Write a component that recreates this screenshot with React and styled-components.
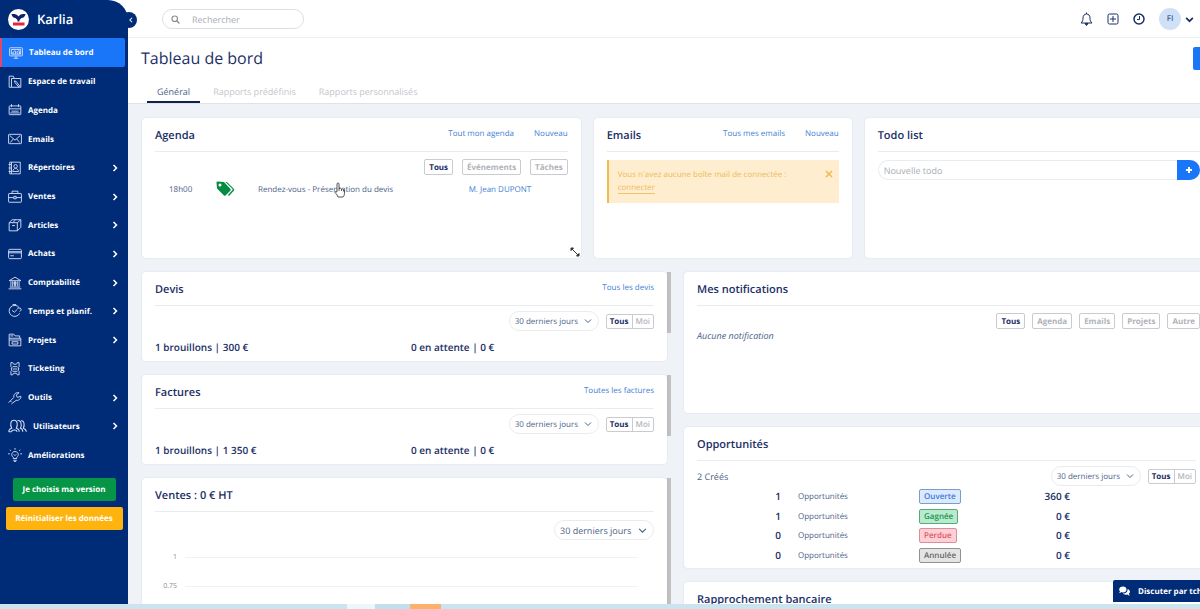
import React from "react";
import styled, { createGlobalStyle, css } from "styled-components";

const navy = "#002c77";
const ink = "#1b2f66";
const muted = "#4c6288";
const blue = "#1976f8";
const link = "#3f7fd4";
const line = "#e9ecef";

const GlobalStyle = createGlobalStyle`
  *, *::before, *::after { box-sizing: border-box; }
  html, body, #root { height: 100%; }
  body {
    margin: 0;
    overflow: hidden;
    font-family: "Open Sans", "Noto Sans", sans-serif;
    font-size: 9px;
    line-height: 13px;
    text-rendering: geometricPrecision;
    color: ${muted};
    background: #eff3f7;
  }
  button, input, select { font: inherit; color: inherit; margin: 0; text-rendering: inherit; }
  button { cursor: pointer; padding: 0; border: 0; background: none; }
  a { text-decoration: none; }
  h1, h2, p, ul { margin: 0; padding: 0; }
  ul { list-style: none; }
`;

const Shell = styled.div`
  height: 100vh;
  display: flex;
  flex-direction: column;
  overflow: hidden;
`;
const Workspace = styled.div`
  flex: 1;
  min-height: 0;
  display: flex;
  position: relative;
  overflow: hidden;
`;

/* Sidebar */
const SidebarWrap = styled.div`
  flex: none;
  position: relative;
  width: 128px;
  background: linear-gradient(#fff 103px, transparent 103px);
`;
const Sidebar = styled.aside`
  position: relative;
  height: 100%;
  background: ${navy};
  border-top-right-radius: 20px;
  color: #fff;
`;
const Collapse = styled.button`
  position: absolute;
  top: 12px;
  right: -9px;
  width: 16px;
  height: 16px;
  border-radius: 50%;
  background: ${navy};
  color: #fff;
  display: flex;
  align-items: center;
  justify-content: flex-end;
  padding-right: 3px;
`;
const Brand = styled.a`
  display: flex;
  align-items: center;
  gap: 8px;
  height: 38px;
  padding-left: 8px;
  color: #fff;
  font-size: 13px;
  font-weight: 600;
`;
const NavList = styled.ul`
  display: grid;
  grid-auto-rows: 1fr;
  height: 431px;
`;
const NavLink = styled.a`
  display: flex;
  align-items: center;
  gap: 6px;
  height: 100%;
  margin-right: 3px;
  padding: 1px 6px 0 8px;
  color: #fff;
  font-size: 8px;
  font-weight: 700;
  white-space: nowrap;
  > svg:first-child { flex: none; color: #d3dcf5; }
  > svg:last-child { margin-left: auto; }
  ${(p) =>
    p.$active &&
    css`
      background: ${blue};
      border-left: 2px solid #e0486b;
      border-radius: 0 2px 2px 0;
      padding-left: 7px;
    `}
`;
const SideActions = styled.div`
  display: flex;
  flex-direction: column;
  align-items: center;
  gap: 6px;
  padding-top: 9px;
`;
const SideButton = styled.button`
  height: 23px;
  width: ${(p) => (p.$wide ? "117px" : "103px")};
  border-radius: 2px;
  background: ${(p) => (p.$wide ? "#ffb30f" : "#069546")};
  color: #fff;
  font-size: 8px;
  font-weight: 700;
  white-space: nowrap;
`;

/* Top bar and page heading */
const Main = styled.main`
  flex: 1;
  min-width: 0;
`;
const TopBar = styled.header`
  height: 38px;
  display: flex;
  align-items: center;
  justify-content: space-between;
  padding: 1px 6px 0 34px;
  background: #fff;
  border-bottom: 1px solid #eceef1;
`;
const SearchBox = styled.label`
  display: flex;
  align-items: center;
  gap: 12px;
  width: 142px;
  height: 20px;
  padding: 0 8px;
  border: 1px solid #dcdfe3;
  border-radius: 10px;
  color: #8b8f97;
`;
const PlainInput = styled.input`
  flex: 1;
  min-width: 0;
  height: 100%;
  padding: 0;
  border: 0;
  outline: 0;
  background: none;
  &::placeholder { color: #a9adb5; opacity: 1; }
`;
const TopActions = styled.div`
  display: flex;
  align-items: center;
  gap: 14px;
  color: ${ink};
`;
const IconButton = styled.button`
  display: flex;
  align-items: center;
`;
const Account = styled.button`
  display: flex;
  align-items: center;
  gap: 4px;
`;
const Avatar = styled.span`
  width: 22px;
  height: 22px;
  border-radius: 50%;
  background: #cfe1f8;
  color: ${muted};
  font-size: 8px;
  font-weight: 600;
  line-height: 22px;
  text-align: center;
`;
const PageHead = styled.section`
  height: 66px;
  background: #fff;
  border-bottom: 1px solid #dfe3e8;
  padding-left: 13px;
  display: flex;
  flex-direction: column;
  justify-content: space-between;
`;
const TitleRow = styled.div`
  display: flex;
  justify-content: space-between;
  padding-top: 9px;
`;
const PageTitle = styled.h1`
  color: ${ink};
  font-size: 16px;
  line-height: 23px;
  font-weight: 500;
`;
const EditButton = styled.button`
  width: 7px;
  height: 23px;
  border-radius: 2px 0 0 2px;
  background: ${blue};
`;
const Tabs = styled.nav`
  display: flex;
  gap: 3px;
  padding-left: 6px;
`;
const Tab = styled.a`
  padding: 0 10px 2px;
  line-height: 14px;
  color: ${(p) => (p.$active ? muted : "#c3c6cb")};
  border-bottom: 2px solid ${(p) => (p.$active ? "#10204f" : "transparent")};
`;

/* Dashboard grid */
const Board = styled.div`
  display: grid;
  grid-template-columns: repeat(12, 1fr);
  gap: 14px 13px;
  margin-right: -13px;
  padding: 14px 0 0 14px;
`;
const Cell = styled.div`
  grid-column: span ${(p) => p.$span};
  min-width: 0;
  display: flex;
  flex-direction: column;
  gap: 14px;
`;
const CardFrame = styled.section`
  display: flex;
  min-height: ${(p) => p.$h}px;
`;
const CardBody = styled.div`
  position: relative;
  flex: 1;
  min-width: 0;
  padding: 0 13px;
  background: #fff;
  border-radius: 4px;
  box-shadow: 0 0 2px rgba(40, 60, 100, 0.12);
`;
const ScrollThumb = styled.div`
  flex: none;
  width: 4px;
  height: ${(p) => p.$size};
  background: ${(p) => (p.$size === "0" ? "none" : "#c1c1c1")};
`;
const CardHead = styled.header`
  display: flex;
  justify-content: space-between;
  height: 34px;
  border-bottom: 1px solid ${line};
`;
const CardTitle = styled.h2`
  color: ${ink};
  font-size: 11px;
  line-height: 36px;
  font-weight: 600;
`;
const CardLinks = styled.div`
  display: flex;
  gap: 20px;
  line-height: 31px;
`;
const TextLink = styled.a`
  color: ${link};
  font-size: 8px;
  white-space: nowrap;
`;

/* Filters */
const Filters = styled.div`
  display: flex;
  justify-content: flex-end;
  gap: ${(p) => p.$gap}px;
  padding-top: 7px;
`;
const FilterButton = styled.button`
  height: 16px;
  padding: 0 4px;
  border: 1px solid #c9cbce;
  border-radius: 2px;
  font-size: 8px;
  line-height: 13px;
  font-weight: 700;
  color: ${(p) => (p.$on ? ink : "#b0b3b8")};
`;
const ToolRow = styled.div`
  display: flex;
  align-items: center;
  justify-content: flex-end;
  gap: 7px;
  padding-top: ${(p) => p.$top || 5}px;
`;
const ToolLabel = styled.span`
  margin-right: auto;
`;
const Picker = styled.div`
  position: relative;
  display: flex;
  align-items: center;
  width: ${(p) => (p.$large ? 100 : 90)}px;
  height: 20px;
  border: 1px solid ${line};
  border-radius: 10px;
  font-size: ${(p) => (p.$large ? 9 : 8)}px;
  select {
    appearance: none;
    width: 100%;
    height: 100%;
    padding: 0 18px 0 5px;
    border: 0;
    outline: 0;
    background: none;
  }
  svg {
    position: absolute;
    right: 6px;
    pointer-events: none;
  }
`;
const Toggle = styled.div`
  display: flex;
  border: 1px solid #c9cbce;
  border-radius: 2px;
  height: 15px;
`;
const ToggleButton = styled.button`
  padding: 0 3px;
  line-height: 13px;
  font-size: 8px;
  font-weight: ${(p) => (p.$on ? 700 : 600)};
  color: ${(p) => (p.$on ? ink : "#b4b7bb")};
  & + & { border-left: 1px solid #c9cbce; }
`;
const Figures = styled.div`
  display: grid;
  grid-template-columns: 1fr 1fr;
  gap: 13px;
  padding-top: 8px;
  color: ${ink};
  font-size: 10px;
  line-height: 16px;
  font-weight: 600;
`;

/* Agenda */
const AgendaTable = styled.table`
  width: 100%;
  margin-top: 4px;
  border-collapse: collapse;
  table-layout: fixed;
  font-size: 8px;
  td { padding: 0; height: 20px; vertical-align: middle; white-space: nowrap; }
  td:nth-child(1) { width: 61px; padding-left: 14px; }
  td:nth-child(2) { width: 42px; }
  td:nth-child(4) { width: 99px; }
  svg { display: block; }
`;
const ResizeMark = styled.span`
  position: absolute;
  right: 1px;
  bottom: 1px;
  display: flex;
  color: #333;
`;
const Pointer = styled.span`
  position: absolute;
  left: 192px;
  top: 64px;
  display: flex;
  pointer-events: none;
`;

/* Emails */
const Alert = styled.div`
  display: flex;
  align-items: flex-start;
  justify-content: space-between;
  gap: 26px;
  min-height: 43px;
  margin-top: 8px;
  padding: 8px 6px 8px 9px;
  border-left: 2px solid #f3bb4d;
  background: #feedce;
  color: #efbb5c;
  font-size: 8px;
  a { color: inherit; border-bottom: 1px solid #f3c36a; }
`;
const AlertClose = styled.button`
  display: flex;
  padding-top: 2px;
`;

/* Todo */
const TodoForm = styled.form`
  display: flex;
  height: 20px;
  margin-top: 8px;
  padding-left: 5px;
  border: 1px solid ${line};
  border-right: 0;
  border-radius: 10px;
`;
const AddButton = styled.button`
  width: 23px;
  margin: -1px 0;
  border-radius: 0 10px 10px 0;
  background: ${blue};
  color: #fff;
  display: flex;
  align-items: center;
  justify-content: center;
`;

/* Notifications and opportunities */
const Empty = styled.p`
  font-style: italic;
`;
const DealTable = styled.table`
  width: 100%;
  height: 78px;
  margin-top: 1px;
  border-collapse: collapse;
  table-layout: fixed;
  font-size: 8px;
  td { padding: 0; vertical-align: middle; }
  td:nth-child(1), td:nth-child(4) {
    color: ${ink};
    font-size: 10px;
    font-weight: 600;
    text-align: right;
  }
  td:nth-child(1) { width: 84px; }
  td:nth-child(2) { width: 138px; padding-left: 17px; }
  td:nth-child(3) { width: 60px; }
  td:nth-child(4) { width: 91px; }
`;
const tones = {
  open: { text: "#3c78dc", fill: "#dbe9fd", edge: "#7c9dcb" },
  won: { text: "#199150", fill: "#b8ebcd", edge: "#58a97b" },
  lost: { text: "#dc5566", fill: "#fcd0d5", edge: "#dd8e98" },
  cancelled: { text: "#666", fill: "#e4e4e4", edge: "#929292" },
};
const Badge = styled.span`
  display: inline-block;
  height: 15px;
  padding: 0 4px;
  border: 1px solid ${(p) => tones[p.$tone].edge};
  border-radius: 2px;
  font-size: 8px;
  line-height: 13px;
  font-weight: 600;
  vertical-align: middle;
  background: ${(p) => tones[p.$tone].fill};
  color: ${(p) => tones[p.$tone].text};
`;

/* Sales chart */
const Chart = styled.div`
  padding: 3px 16px 0 0;
`;
const ChartLine = styled.div`
  display: grid;
  grid-template-columns: 22px 1fr;
  align-items: center;
  gap: 8px;
  height: 29px;
  font-size: 7px;
  text-align: right;
  color: #8a8f98;
  &::after { content: ""; height: 1px; background: #f1f2f4; }
`;

const ChatButton = styled.button`
  position: absolute;
  right: -19px;
  bottom: 2px;
  display: flex;
  align-items: center;
  gap: 8px;
  width: 106px;
  height: 22px;
  padding: 0 6px;
  border-radius: 2px 0 0 0;
  background: ${navy};
  color: #fff;
  font-size: 8px;
  font-weight: 700;
  white-space: nowrap;
  svg { flex: none; }
`;
const TaskBar = styled.footer`
  flex: none;
  display: flex;
  height: 5px;
  padding-left: 347px;
  background: #cce4ef;
`;
const Task = styled.span`
  width: ${(p) => p.$w}px;
  background: ${(p) => p.$c};
`;

const shapes = {
  board: <><rect x="1" y="3" width="22" height="14" rx="1" /><path d="M8 21h8M12 17v4M4 6h16v8H4zM6 12l4-4 3 3 5-4M7 14v-3M11 14v-4M15 14v-3M18 14V9" /></>,
  space: <><path d="M6 21H2V2h7l2 4h11v15h-4M6 21V6h5M6 21h13" /><path d="M11 10l3 1 6 8-2 1-6-7z" /></>,
  calendar: <><rect x="2" y="5" width="20" height="15" rx="1" /><path d="M2 10h20M6 2v5M18 2v5M6 14h12M4 17h16" /></>,
  mail: <><rect x="1" y="4" width="22" height="16" rx="1" /><path d="M3 6l9 8 9-8M4 18l5-6M20 18l-5-6" /></>,
  contacts: <><path d="M3 2h18v20H3zM6 2v20M1 6h4M1 12h4M1 18h4" /><circle cx="13" cy="9" r="3" /><path d="M8 18c1-7 9-7 10 0z" /></>,
  briefcase: <><rect x="1" y="6" width="22" height="15" rx="1" /><path d="M7 6V2h10v4M1 13h9M14 13h9M10 11h4v4h-4z" /></>,
  box: <><path d="M2 8h14v14H2zM2 8l5-5h15l-6 5M22 3v13l-6 6M8 8l5-5M7 13h5" /></>,
  card: <><rect x="1" y="4" width="22" height="16" rx="2" /><path d="M1 8h22M1 10h22M4 15h6" /></>,
  bank: <><path d="M2 8l10-6 10 6zM1 22h22M3 19h18M5 9v9M8 9v9M16 9v9M19 9v9M11 9v9M13 9v9M9 12h6" /></>,
  clock: <><path d="M20 16a9.500 9.500 0 1 1-1-10" /><path d="M7 11l4 3 5-5M16 7h5l2 3-3 3M8 1h6" /></>,
  folders: <><path d="M2 22V2h8l2 3h8v4h2v13zM2 9h18M2 12h20M7 15h10v4H7zM4 5h5" /></>,
  ticket: <><path d="M5 1h3a4 3 0 0 0 8 0h3v7l-2 2 2 2-2 2 2 2v6h-3a4 3 0 0 0-8 0H5v-6l2-2-2-2 2-2-2-2zM8 8h8M8 12h8M8 16h8" /></>,
  wrench: <><path d="M1 20l9-9c-1-5 3-9 9-8l-5 4 2 4 6-2c1 4-4 8-8 7l-8 6M4 17l2 2" /></>,
  bulb: <><path d="M9 16c-5-4-2-10 3-10s8 6 3 10v2H9zM9 21h6M10 23h4M12 0v3M3 3l2 2M21 3l-2 2M0 10h3M21 10h3M10 11l2 2 2-2" /></>,
};

function NavIcon({ name }) {
  if (name === "users") {
    return (
      <svg width="19" height="14" viewBox="0 0 32 24" fill="none" stroke="currentColor" strokeWidth="1.8">
        <path d="M1 22c0-5 2-5 5-6C3 10 4 2 10 2s7 8 4 14c3 1 5 1 5 6M6 22c0-4 9-4 9 0M16 3c6-2 8 7 5 13 3 1 4 2 4 6M22 3c5-1 7 6 4 13 3 1 5 2 5 6M1 22h5" />
      </svg>
    );
  }
  return (
    <svg width="14" height="14" viewBox="0 0 24 24" fill="none" stroke="currentColor" strokeWidth="1.6">
      {shapes[name]}
    </svg>
  );
}

function Chevron({ size = 8, turn = "down", weight = 1.2 }) {
  const d = { down: "M1 2.5l3 3 3-3", right: "M2.5 1l3 3-3 3", left: "M5.5 1l-3 3 3 3" }[turn];
  return (
    <svg width={size} height={size} viewBox="0 0 8 8" fill="none" stroke="currentColor" strokeWidth={weight}>
      <path d={d} />
    </svg>
  );
}

function Logo() {
  return (
    <svg width="21" height="21" viewBox="0 0 42 42">
      <circle cx="21" cy="21" r="21" fill="#fff" />
      <path d="M7 10h5c4 0 7 2 9 5 2-3 5-5 9-5h5c-1 5-4 8-8 8l-4 4v3h-4v-3l-4-4c-4 0-7-3-8-8z" fill="#10206b" />
      <path d="M10 27h23v6H10z" fill="#e3263c" />
    </svg>
  );
}

const nav = [
  ["board", "Tableau de bord"],
  ["space", "Espace de travail"],
  ["calendar", "Agenda"],
  ["mail", "Emails"],
  ["contacts", "Répertoires", true],
  ["briefcase", "Ventes", true],
  ["box", "Articles", true],
  ["card", "Achats", true],
  ["bank", "Comptabilité", true],
  ["clock", "Temps et planif.", true],
  ["folders", "Projets", true],
  ["ticket", "Ticketing"],
  ["wrench", "Outils", true],
  ["users", "Utilisateurs", true],
  ["bulb", "Améliorations"],
];

function Card({ title, links = [], height, scroll, children }) {
  return (
    <CardFrame $h={height}>
      <CardBody>
        <CardHead>
          <CardTitle>{title}</CardTitle>
          <CardLinks>
            {links.map((text) => (
              <TextLink href="#" key={text}>{text}</TextLink>
            ))}
          </CardLinks>
        </CardHead>
        {children}
      </CardBody>
      {scroll && <ScrollThumb $size={scroll} />}
    </CardFrame>
  );
}

function FilterBar({ items, gap }) {
  return (
    <Filters $gap={gap}>
      {items.map((text, i) => (
        <FilterButton key={text} $on={i === 0}>{text}</FilterButton>
      ))}
    </Filters>
  );
}

function Period({ large, name }) {
  return (
    <Picker $large={large}>
      <select aria-label={"Période " + name}>
        <option>30 derniers jours</option>
      </select>
      <Chevron size={large ? 9 : 8} weight={1} />
    </Picker>
  );
}

function Scope() {
  return (
    <Toggle>
      <ToggleButton $on>Tous</ToggleButton>
      <ToggleButton>Moi</ToggleButton>
    </Toggle>
  );
}

function SummaryCard({ title, all, draft, pending }) {
  return (
    <Card title={title} links={[all]} height={89} scroll="61px">
      <ToolRow>
        <Period name={title} />
        <Scope />
      </ToolRow>
      <Figures>
        <span>{draft}</span>
        <span>{pending}</span>
      </Figures>
    </Card>
  );
}

const deals = [
  ["1", "Ouverte", "open", "360 €"],
  ["1", "Gagnée", "won", "0 €"],
  ["0", "Perdue", "lost", "0 €"],
  ["0", "Annulée", "cancelled", "0 €"],
];

export default function App() {
  return (
    <Shell>
      <GlobalStyle />
      <Workspace>
        <SidebarWrap>
          <Collapse aria-label="Réduire le menu"><Chevron size={6} turn="left" weight={1.4} /></Collapse>
          <Sidebar>
            <Brand href="#"><Logo />Karlia</Brand>
            <NavList>
              {nav.map(([icon, text, more], i) => (
                <li key={text}>
                  <NavLink href="#" $active={i === 0}>
                    <NavIcon name={icon} />
                    <span>{text}</span>
                    {more && <Chevron turn="right" weight={1.5} />}
                  </NavLink>
                </li>
              ))}
            </NavList>
            <SideActions>
              <SideButton>Je choisis ma version</SideButton>
              <SideButton $wide>Réinitialiser les données</SideButton>
            </SideActions>
          </Sidebar>
        </SidebarWrap>

        <Main>
          <TopBar>
            <SearchBox>
              <svg width="9" height="9" viewBox="0 0 18 18" fill="none" stroke="currentColor" strokeWidth="2.4">
                <circle cx="7.5" cy="7.5" r="5.5" /><path d="M11.5 11.5L17 17" />
              </svg>
              <PlainInput aria-label="Rechercher" placeholder="Rechercher" />
            </SearchBox>
            <TopActions>
              <IconButton aria-label="Notifications">
                <svg width="13" height="14" viewBox="0 0 26 28" fill="none" stroke="currentColor" strokeWidth="2">
                  <path d="M2 22c3-3 4-5 4-10 0-5 3-8 7-8s7 3 7 8c0 5 1 7 4 10zM13 1v3" />
                  <path d="M10 23h6l-3 4z" fill="currentColor" />
                </svg>
              </IconButton>
              <IconButton aria-label="Ajouter">
                <svg width="12" height="12" viewBox="0 0 24 24" fill="none" stroke="currentColor" strokeWidth="2">
                  <rect x="2" y="2" width="20" height="20" rx="3" /><path d="M12 6v12M6 12h12" />
                </svg>
              </IconButton>
              <IconButton aria-label="Historique">
                <svg width="12" height="12" viewBox="0 0 24 24" fill="none" stroke="currentColor" strokeWidth="3">
                  <circle cx="12" cy="12" r="10" /><path d="M13 6v7H8" strokeWidth="2" />
                </svg>
              </IconButton>
              <Account>
                <Avatar>FI</Avatar>
                <Chevron size={9} weight={1.5} />
              </Account>
            </TopActions>
          </TopBar>

          <PageHead>
            <TitleRow>
              <PageTitle>Tableau de bord</PageTitle>
              <EditButton aria-label="Personnaliser" />
            </TitleRow>
            <Tabs>
              <Tab href="#" $active>Général</Tab>
              <Tab href="#">Rapports prédéfinis</Tab>
              <Tab href="#">Rapports personnalisés</Tab>
            </Tabs>
          </PageHead>

          <Board>
            <Cell $span={5}>
              <Card title="Agenda" links={["Tout mon agenda", "Nouveau"]} height={140}>
                <FilterBar items={["Tous", "Événements", "Tâches"]} gap={9} />
                <AgendaTable>
                  <tbody>
                    <tr>
                      <td>18h00</td>
                      <td>
                        <svg width="19" height="16" viewBox="0 0 38 32" fill="#058c43">
                          <path fillRule="evenodd" d="M1 3q0-2 2-2l13 1 13 14q1 2 0 3L19 29q-2 1-3 0L2 15zM8 5a3 3 0 1 0 0 6a3 3 0 0 0 0-6z" />
                          <path d="M19 2h3l14 14q1 2 0 3L26 30l-2-2 9-10q1-1 0-2z" />
                        </svg>
                      </td>
                      <td>Rendez-vous - Présentation du devis</td>
                      <td><TextLink href="#">M. Jean DUPONT</TextLink></td>
                    </tr>
                  </tbody>
                </AgendaTable>
                <Pointer>
                  <svg width="11" height="16" viewBox="0 0 22 32" fill="#fff" stroke="#444" strokeWidth="1.8" strokeLinejoin="round">
                    <path d="M6 19V4q0-2 2-2t2 2v9q4-1 5 1 3-1 4 1 2 0 2 3v5q0 4-3 7H8q-1-4-6-9-1-3 4-1z" />
                    <path d="M10 13v5M15 14v4M19 16v3" />
                  </svg>
                </Pointer>
                <ResizeMark>
                  <svg width="10" height="10" viewBox="0 0 20 20" fill="currentColor" stroke="currentColor" strokeWidth="2">
                    <path d="M4 4l12 12" /><path d="M2 2h5L2 7zM18 18h-5l5-5z" />
                  </svg>
                </ResizeMark>
              </Card>
            </Cell>

            <Cell $span={3}>
              <Card title="Emails" links={["Tous mes emails", "Nouveau"]} height={140}>
                <Alert role="alert">
                  <p>Vous n'avez aucune boîte mail de connectée : <a href="#">connecter</a></p>
                  <AlertClose aria-label="Fermer">
                    <svg width="8" height="8" viewBox="0 0 8 8" stroke="currentColor" strokeWidth="1.6">
                      <path d="M1 1l6 6M7 1L1 7" />
                    </svg>
                  </AlertClose>
                </Alert>
              </Card>
            </Cell>

            <Cell $span={4}>
              <Card title="Todo list" height={140}>
                <TodoForm>
                  <PlainInput aria-label="Nouvelle todo" placeholder="Nouvelle todo" />
                  <AddButton type="button" aria-label="Ajouter la todo">
                    <svg width="8" height="8" viewBox="0 0 8 8" stroke="currentColor" strokeWidth="2">
                      <path d="M4 1v6M1 4h6" />
                    </svg>
                  </AddButton>
                </TodoForm>
              </Card>
            </Cell>

            <Cell $span={6}>
              <SummaryCard title="Devis" all="Tous les devis" draft="1 brouillons | 300 €" pending="0 en attente | 0 €" />
              <SummaryCard title="Factures" all="Toutes les factures" draft="1 brouillons | 1 350 €" pending="0 en attente | 0 €" />
              <Card title="Ventes : 0 € HT" height={240} scroll="100%">
                <ToolRow $top={8}>
                  <Period large name="des ventes" />
                </ToolRow>
                <Chart>
                  <ChartLine>1</ChartLine>
                  <ChartLine>0.75</ChartLine>
                </Chart>
              </Card>
            </Cell>

            <Cell $span={6}>
              <Card title="Mes notifications" height={141}>
                <FilterBar items={["Tous", "Agenda", "Emails", "Projets", "Autre"]} gap={7} />
                <Empty>Aucune notification</Empty>
              </Card>
              <Card title="Opportunités" height={141} scroll="0">
                <ToolRow>
                  <ToolLabel>2 Créés</ToolLabel>
                  <Period name="des opportunités" />
                  <Scope />
                </ToolRow>
                <DealTable>
                  <tbody>
                    {deals.map(([count, state, tone, amount]) => (
                      <tr key={state}>
                        <td>{count}</td>
                        <td>Opportunités</td>
                        <td><Badge $tone={tone}>{state}</Badge></td>
                        <td>{amount}</td>
                        <td />
                      </tr>
                    ))}
                  </tbody>
                </DealTable>
              </Card>
              <Card title="Rapprochement bancaire" height={141} />
            </Cell>
          </Board>
        </Main>
        <ChatButton>
          <svg width="11" height="10" viewBox="0 0 22 20" fill="currentColor">
            <path d="M8 1c4 0 7 2 7 6s-3 6-7 6c-1 0-2 0-3-1-1 1-3 2-5 2 1-1 2-2 2-3C-2 6 2 1 8 1z" />
            <path d="M17 6c6 2 6 7 3 9 0 2 1 3 2 4-2 0-4-1-5-2-4 1-8 0-9-2 6 0 10-4 9-9z" />
          </svg>
          Discuter par tchat
        </ChatButton>
      </Workspace>
      <TaskBar>
        <Task $w={28} $c="#edf6fa" />
        <Task $w={35} $c="#c3dfee" />
        <Task $w={31} $c="#fcb26c" />
      </TaskBar>
    </Shell>
  );
}
